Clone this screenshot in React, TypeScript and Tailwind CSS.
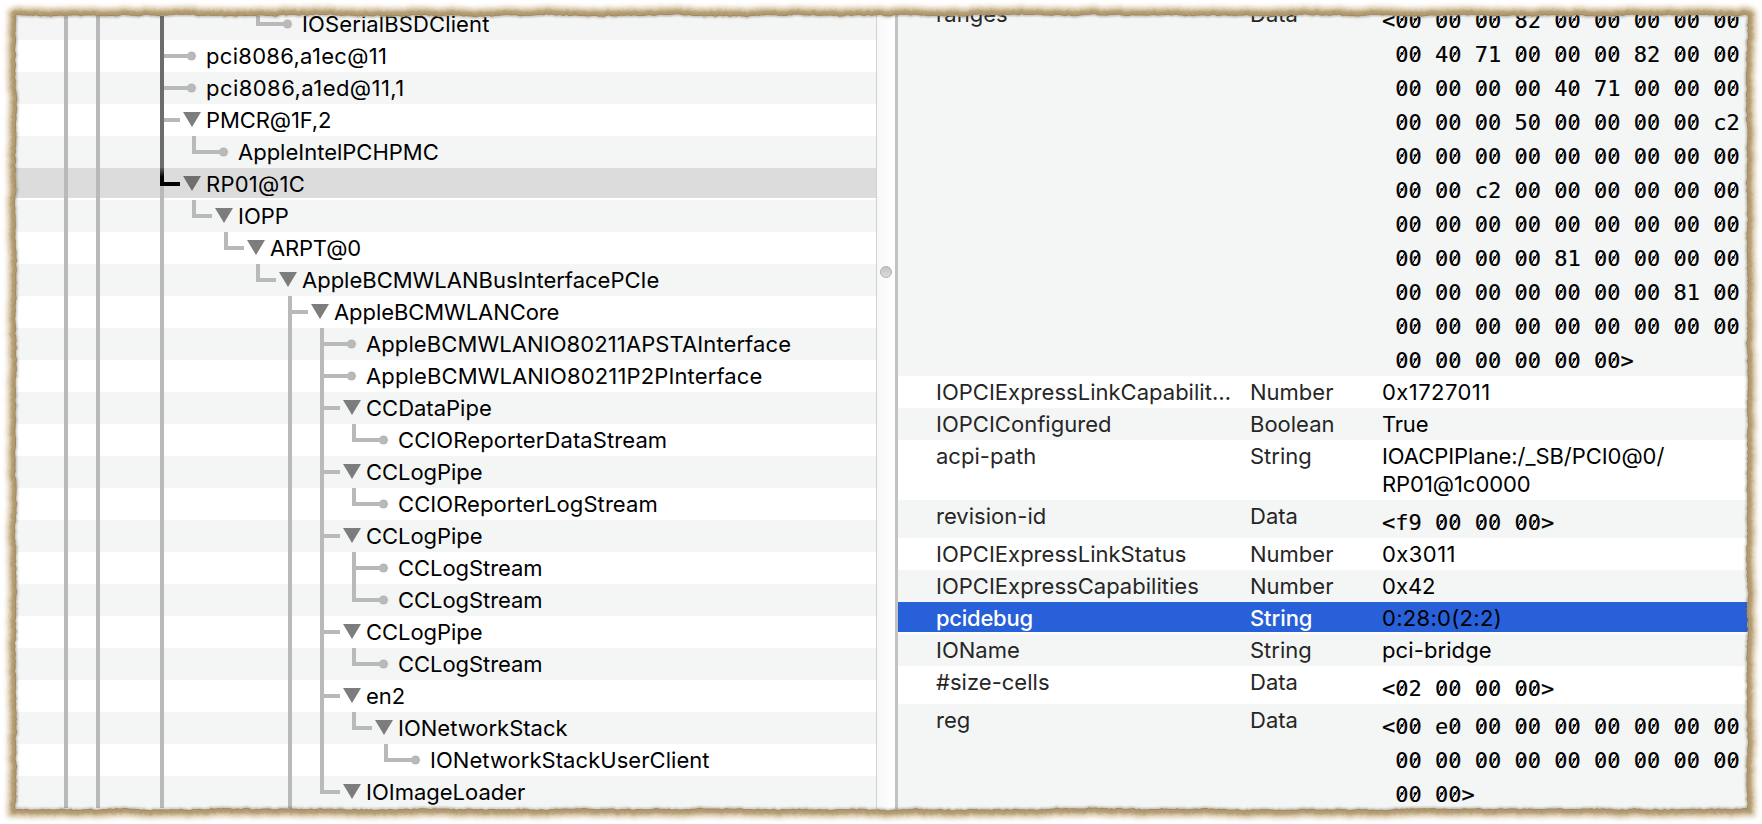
import React from "react";

type Node = { depth: number; label: string; leaf?: boolean; last?: boolean; sel?: boolean; through: number[]; dark?: boolean; track?: string };

// depth n: its connector column is centred at x = 34 + 32 * n
const nodes: Node[] = [
  { depth: 7, label: "IOSerialBSDClient", leaf: true, last: true, through: [1, 2, 4], dark: true, track: "tracking-[0.12px]" },
  { depth: 4, label: "pci8086,a1ec@11", leaf: true, through: [1, 2], dark: true, track: "tracking-[0.3px]" },
  { depth: 4, label: "pci8086,a1ed@11,1", leaf: true, through: [1, 2], dark: true, track: "tracking-[0.45px]" },
  { depth: 4, label: "PMCR@1F,2", through: [1, 2], dark: true, track: "tracking-[-0.1px]" },
  { depth: 5, label: "AppleIntelPCHPMC", leaf: true, last: true, through: [1, 2, 4], dark: true },
  { depth: 4, label: "RP01@1C", sel: true, through: [1, 2], track: "tracking-[0.25px]" },
  { depth: 5, label: "IOPP", last: true, through: [1, 2, 4] },
  { depth: 6, label: "ARPT@0", last: true, through: [1, 2, 4], track: "tracking-[-0.2px]" },
  { depth: 7, label: "AppleBCMWLANBusInterfacePCIe", last: true, through: [1, 2, 4] },
  { depth: 8, label: "AppleBCMWLANCore", through: [1, 2, 4], track: "tracking-[-0.07px]" },
  { depth: 9, label: "AppleBCMWLANIO80211APSTAInterface", leaf: true, through: [1, 2, 4, 8], track: "tracking-[0.1px]" },
  { depth: 9, label: "AppleBCMWLANIO80211P2PInterface", leaf: true, through: [1, 2, 4, 8], track: "tracking-[0.13px]" },
  { depth: 9, label: "CCDataPipe", through: [1, 2, 4, 8] },
  { depth: 10, label: "CCIOReporterDataStream", leaf: true, last: true, through: [1, 2, 4, 8, 9], track: "tracking-[0.1px]" },
  { depth: 9, label: "CCLogPipe", through: [1, 2, 4, 8], track: "tracking-[-0.06px]" },
  { depth: 10, label: "CCIOReporterLogStream", leaf: true, last: true, through: [1, 2, 4, 8, 9], track: "tracking-[0.07px]" },
  { depth: 9, label: "CCLogPipe", through: [1, 2, 4, 8], track: "tracking-[-0.06px]" },
  { depth: 10, label: "CCLogStream", leaf: true, through: [1, 2, 4, 8, 9], track: "tracking-[-0.06px]" },
  { depth: 10, label: "CCLogStream", leaf: true, last: true, through: [1, 2, 4, 8, 9], track: "tracking-[-0.06px]" },
  { depth: 9, label: "CCLogPipe", through: [1, 2, 4, 8], track: "tracking-[-0.06px]" },
  { depth: 10, label: "CCLogStream", leaf: true, last: true, through: [1, 2, 4, 8, 9], track: "tracking-[-0.06px]" },
  { depth: 9, label: "en2", through: [1, 2, 4, 8] },
  { depth: 10, label: "IONetworkStack", last: true, through: [1, 2, 4, 8, 9] },
  { depth: 11, label: "IONetworkStackUserClient", leaf: true, last: true, through: [1, 2, 4, 8, 9], track: "tracking-[0.05px]" },
  { depth: 9, label: "IOImageLoader", last: true, through: [1, 2, 4, 8] },
];

function Connectors({ node }: { node: Node }) {
  const x = 34 + 32 * node.depth;
  const w = x + 44;
  const grey = "#b9b9b9";
  return (
    <svg width={w} height="32" viewBox={`0 0 ${w} 32`} className="block h-8 shrink-0">
      {node.through.map((d) => (
        <rect key={d} x={32 + 32 * d} y="0" width="4" height="32" fill={d === 4 && node.dark ? "#6c6c6c" : grey} />
      ))}
      {node.sel ? (
        <>
          <rect x={x - 2} y="14" width="4" height="18" fill={grey} />
          <rect x={x - 2} y="0" width="4" height="18" fill="url(#selline)" />
          <rect x={x - 2} y="14" width="20" height="4" fill="#000" />
        </>
      ) : (
        <>
          <rect x={x - 2} y="0" width="4" height={node.last ? 18 : 32} fill={node.depth === 4 && node.dark ? "#6c6c6c" : grey} />
          <rect x={x + 2} y="14" width={node.leaf ? 26 : 16} height="4" fill={grey} />
        </>
      )}
      {node.leaf ? (
        <circle cx={x + 29.5} cy="16" r="4.6" fill={grey} />
      ) : (
        <path d={`M${x + 21} 8h18l-9 15z`} fill={node.sel ? "#6f6f6f" : "#7d7d7d"} />
      )}
    </svg>
  );
}

function TreePane() {
  return (
    <div className="w-[876px] shrink-0 overflow-hidden bg-white pt-2">
      {nodes.map((n, i) => (
        <div key={i} className={`flex h-8 ${n.sel ? "border-b-2 border-white bg-[#dcdcdc]" : i % 2 === 0 ? "bg-[#f4f5f5]" : "bg-white"}`}>
          <Connectors node={n} />
          <span className={`whitespace-pre text-[22px] leading-8 text-black ${n.track ?? ""}`}>{n.label}</span>
        </div>
      ))}
    </div>
  );
}

type Prop = { name: string; type: string; value: string[]; mono?: boolean; h: string; track?: string; sel?: boolean; bg: string };

const Z9 = " 00 00 00 00 00 00 00 00 00";
const props: Prop[] = [
  {
    name: "ranges", type: "Data", mono: true, h: "-mt-0.5 h-[378px]", bg: "bg-[#f4f5f5]",
    value: [
      "<00 00 00 82 00 00 00 00 00",
      " 00 40 71 00 00 00 82 00 00",
      " 00 00 00 00 40 71 00 00 00",
      " 00 00 00 50 00 00 00 00 c2",
      Z9,
      " 00 00 c2 00 00 00 00 00 00",
      Z9,
      " 00 00 00 00 81 00 00 00 00",
      " 00 00 00 00 00 00 00 81 00",
      Z9,
      " 00 00 00 00 00 00>",
    ],
  },
  { name: "IOPCIExpressLinkCapabilit…", type: "Number", value: ["0x1727011"], track: "tracking-[0.45px]", h: "h-8", bg: "bg-white" },
  { name: "IOPCIConfigured", type: "Boolean", value: ["True"], track: "tracking-[-0.2px]", h: "h-8", bg: "bg-[#f4f5f5]" },
  { name: "acpi-path", type: "String", value: ["IOACPIPlane:/_SB/PCI0@0/", "RP01@1c0000"], track: "tracking-[-0.06px]", h: "h-[60px]", bg: "bg-white" },
  { name: "revision-id", type: "Data", value: ["<f9 00 00 00>"], mono: true, h: "h-[38px]", bg: "bg-[#f4f5f5]" },
  { name: "IOPCIExpressLinkStatus", type: "Number", value: ["0x3011"], track: "tracking-[0.45px]", h: "h-8", bg: "bg-white" },
  { name: "IOPCIExpressCapabilities", type: "Number", value: ["0x42"], h: "h-8", bg: "bg-[#f4f5f5]" },
  { name: "pcidebug", type: "String", value: ["0:28:0(2:2)"], track: "tracking-[0.3px]", h: "h-8", sel: true, bg: "border-b-2 border-white bg-[#2860d9]" },
  { name: "IOName", type: "String", value: ["pci-bridge"], track: "tracking-[0.1px]", h: "h-8", bg: "bg-[#f4f5f5]" },
  { name: "#size-cells", type: "Data", value: ["<02 00 00 00>"], mono: true, h: "h-[38px]", bg: "bg-white" },
  { name: "reg", type: "Data", value: ["<00 e0 00 00 00 00 00 00 00", Z9, " 00 00>"], mono: true, h: "h-[120px]", bg: "bg-[#f4f5f5]" },
];

// Hex dump text; each zero carries a diagonal slash through its bowl.
function Hex({ text }: { text: string }) {
  return (
    <>
      {text.split(/(0)/).map((part, i) =>
        part === "0" ? (
          <span
            key={i}
            className="bg-[linear-gradient(to_bottom_right,transparent_43%,#000_48%,#000_52%,transparent_57%)] bg-[length:7px_11px] bg-[position:3px_7px] bg-no-repeat"
          >
            0
          </span>
        ) : (
          part
        ),
      )}
    </>
  );
}

function PropertyPane() {
  return (
    <div className="min-w-0 flex-1 overflow-hidden">
      {props.map((p) => (
        <div key={p.name} className={`flex pl-[38px] text-[22px] leading-8 ${p.h} ${p.bg} ${p.sel ? "text-white" : "text-[#262626]"}`}>
          <span className={`w-[314px] shrink-0 whitespace-pre ${p.sel ? "font-medium tracking-[-0.25px]" : "tracking-[0.02px]"}`}>{p.name}</span>
          <span className={`w-[132px] shrink-0 whitespace-pre ${p.sel ? "font-medium tracking-[-0.1px]" : ""}`}>{p.type}</span>
          <div
            className={`text-black ${
              p.mono
                ? "pt-1.5 font-['DejaVu_Sans_Mono',monospace] leading-[34px] [-webkit-text-stroke:0.2px_#000]"
                : `pt-0.5 leading-7 ${p.track ?? ""}`
            }`}
          >
            {p.value.map((v, i) => (
              <div key={i} className="whitespace-pre">{p.mono ? <Hex text={v} /> : v}</div>
            ))}
          </div>
        </div>
      ))}
    </div>
  );
}

// Irregular outline of the paper, built from a repeatable noise sequence.
function tornOutline() {
  let seed = 7;
  const rnd = () => {
    seed = (seed * 16807) % 2147483647;
    return seed / 2147483647 - 0.5;
  };
  const pts: string[] = [];
  const side = (x0: number, y0: number, x1: number, y1: number) => {
    const len = Math.abs(x1 - x0) + Math.abs(y1 - y0);
    const n = Math.floor(len / 2.5);
    const horizontal = y0 === y1;
    let drift = 0;
    for (let i = 0; i < n; i++) {
      const t = i / n;
      drift = drift * 0.85 + rnd() * 0.8;
      const off = drift + rnd() * 1.1;
      const x = x0 + (x1 - x0) * t + (horizontal ? 0 : off);
      const y = y0 + (y1 - y0) * t + (horizontal ? off : 0);
      pts.push(`${x.toFixed(1)},${y.toFixed(1)}`);
    }
  };
  side(16, 15.5, 1747, 15.5);
  side(1747, 15.5, 1747, 809);
  side(1747, 809, 16, 809);
  side(16, 809, 16, 15.5);
  return "M" + pts.join("L") + "Z";
}
const torn = tornOutline();
const frame = "M0,0H1762V824H0Z" + torn;

function TornFrame() {
  return (
    <svg width="1762" height="824" viewBox="0 0 1762 824" className="pointer-events-none absolute inset-0">
      <defs>
        <clipPath id="outside"><path d={frame} clipRule="evenodd" /></clipPath>
        <filter id="soft" filterUnits="userSpaceOnUse" x="-20" y="-20" width="1802" height="864"><feGaussianBlur stdDeviation="2.8" /></filter>
        <filter id="fine" filterUnits="userSpaceOnUse" x="-20" y="-20" width="1802" height="864"><feGaussianBlur stdDeviation="1.2" /></filter>
        <filter id="grain" filterUnits="userSpaceOnUse" x="0" y="0" width="1762" height="824">
          <feTurbulence type="fractalNoise" baseFrequency="0.3" numOctaves="2" seed="4" result="n" />
          <feColorMatrix in="n" type="matrix" values="0 0 0 0 0.36  0 0 0 0 0.29  0 0 0 0 0.16  1.3 0 0 0 -0.5" result="m" />
          <feGaussianBlur in="SourceGraphic" stdDeviation="2" result="s" />
          <feComposite in="m" in2="s" operator="in" />
        </filter>
      </defs>
      <path d={torn} fill="none" stroke="#5f564a" strokeOpacity="0.45" strokeWidth="2.2" filter="url(#fine)" />
      <path d={frame} fill="#fff" fillRule="evenodd" />
      <g clipPath="url(#outside)">
        <path d={torn} fill="none" stroke="#d3bf9c" strokeWidth="16" filter="url(#soft)" />
        <path d={torn} fill="none" stroke="#ab9265" strokeOpacity="0.8" strokeWidth="9" filter="url(#fine)" />
        <path d={torn} fill="none" stroke="#7d6840" strokeOpacity="0.35" strokeWidth="2" />
        <path d={torn} fill="none" stroke="#000" strokeWidth="11" filter="url(#grain)" />
      </g>
    </svg>
  );
}

export default function App() {
  return (
    <div className="relative h-[824px] w-[1762px] overflow-hidden bg-white font-['Inter',sans-serif]">
      <svg width="0" height="0" className="absolute">
        <linearGradient id="selline" x1="0" y1="0" x2="0" y2="1">
          <stop offset="0" stopColor="#5c5c5c" /><stop offset="0.5" stopColor="#000" />
        </linearGradient>
      </svg>
      <div className="flex h-full">
        <TreePane />
        <div className="flex w-[22px] shrink-0 items-center justify-center border-l border-r-[3px] border-l-[#d2d2d2] border-r-[#c2c2c2] bg-gradient-to-r from-[#f8f8f8] to-white">
          <div className="mb-[280px] size-3 rounded-full border border-[#b0b0b0] bg-gradient-to-b from-[#c4c4c4] to-[#dcdcdc]" />
        </div>
        <PropertyPane />
      </div>
      <TornFrame />
    </div>
  );
}
